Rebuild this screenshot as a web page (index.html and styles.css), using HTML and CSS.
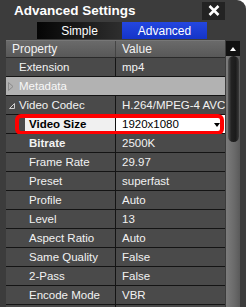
FILE: index.html
```html
<!DOCTYPE html>
<html lang="en">
<head>
    <meta charset="UTF-8">
    <title>Advanced Settings</title>
    <link rel="stylesheet" href="styles.css">
</head>
<body>
    <div class="window">
        <div class="titlebar">
            <span class="title">Advanced Settings</span>
            <div class="close">
                <svg width="12" height="11" viewBox="0 0 12 11"><path d="M1.5 1 L10.5 10 M10.5 1 L1.5 10" stroke="#fff" stroke-width="2.6" fill="none"/></svg>
            </div>
        </div>
        <div class="tabs">
            <div class="tab simple">Simple</div>
            <div class="tab active">Advanced</div>
        </div>
        <div class="grid-wrap">
            <div class="grid">
                <div class="row head">
                    <div class="cell name">Property</div>
                    <div class="cell value">Value</div>
                </div>
                <div class="row">
                    <div class="cell name lvl0">Extension</div>
                    <div class="cell value">mp4</div>
                </div>
                <div class="row group">
                    <div class="cell full lvl0">
                        <svg class="exp" width="6" height="9" viewBox="0 0 6 9"><path d="M0.5 0.5 L5 4.5 L0.5 8.5 Z" fill="none" stroke="#8a8a8a"/></svg>
                        Metadata
                    </div>
                </div>
                <div class="row">
                    <div class="cell name lvl0">
                        <svg class="exp open" width="6" height="6" viewBox="0 0 6 6"><path d="M5.5 0.5 L5.5 5.5 L0.5 5.5 Z" fill="none" stroke="#cfcfcf"/></svg>
                        Video Codec
                    </div>
                    <div class="cell value">H.264/MPEG-4 AVC</div>
                </div>
                <div class="row selected">
                    <div class="cell name lvl1"><span class="label">Video Size</span></div>
                    <div class="cell value">1920x1080<span class="drop"></span></div>
                    <div class="mark"></div>
                </div>
                <div class="row">
                    <div class="cell name lvl1 bold">Bitrate</div>
                    <div class="cell value">2500K</div>
                </div>
                <div class="row">
                    <div class="cell name lvl1">Frame Rate</div>
                    <div class="cell value">29.97</div>
                </div>
                <div class="row">
                    <div class="cell name lvl1">Preset</div>
                    <div class="cell value">superfast</div>
                </div>
                <div class="row">
                    <div class="cell name lvl1">Profile</div>
                    <div class="cell value">Auto</div>
                </div>
                <div class="row">
                    <div class="cell name lvl1">Level</div>
                    <div class="cell value">13</div>
                </div>
                <div class="row">
                    <div class="cell name lvl1">Aspect Ratio</div>
                    <div class="cell value">Auto</div>
                </div>
                <div class="row">
                    <div class="cell name lvl1">Same Quality</div>
                    <div class="cell value">False</div>
                </div>
                <div class="row">
                    <div class="cell name lvl1">2-Pass</div>
                    <div class="cell value">False</div>
                </div>
                <div class="row">
                    <div class="cell name lvl1">Encode Mode</div>
                    <div class="cell value">VBR</div>
                </div>
                <div class="row last">
                    <div class="cell name lvl1"></div>
                    <div class="cell value"></div>
                </div>
            </div>
            <div class="scrollbar">
                <div class="arrow"><span class="up"></span></div>
                <div class="track"><div class="thumb"></div></div>
            </div>
        </div>
    </div>
</body>
</html>
```

FILE: styles.css
```css
body{
    margin: 0;
    background-color: #fff;
    font-family: 'Liberation Sans', Arial, sans-serif;
}
.window{
    width: 246px;
    height: 307px;
    background-color: #3c3c3c;
    border-top-right-radius: 9px;
    overflow: hidden;
}
.titlebar{
    height: 21px;
    display: flex;
    align-items: center;
    padding-left: 14px;
}
.title{
    color: #fff;
    font-weight: bold;
    font-size: 13.5px;
    margin-top: -1px;
}
.close{
    margin-left: auto;
    margin-right: 21px;
    width: 23px;
    height: 18px;
    background-color: #232323;
    display: flex;
    align-items: center;
    justify-content: center;
}
.tabs{
    display: flex;
    margin-left: 37px;
    margin-top: 1px;
    height: 17px;
}
.tab{
    width: 85px;
    color: #fff;
    font-size: 12px;
    display: flex;
    align-items: center;
    justify-content: center;
}
.simple{
    background: linear-gradient(90deg, #050505, #2e2e2e);
}
.active{
    background: linear-gradient(180deg, #2447e0, #1434c8);
}
.grid-wrap{
    display: flex;
    margin-top: 2px;
    padding-left: 6px;
}
.grid{
    width: 219px;
}
.row{
    display: flex;
    height: 18px;
    border-bottom: 1px solid #141414;
    background-color: #4a4a4a;
    color: #f2f2f2;
    font-size: 11.5px;
    position: relative;
}
.head{
    height: 16px;
    font-size: 12px;
    background: linear-gradient(180deg, #6a6a6a, #585858);
    border-top: 1px solid #777;
    border-bottom: 1px solid #2a2a2a;
    margin-top: -1px;
}
.cell{
    display: flex;
    align-items: center;
    white-space: nowrap;
    overflow: hidden;
}
.name{
    width: 110px;
    border-right: 1px solid #141414;
    padding-left: 6px;
    box-sizing: border-box;
}
.value{
    flex: 1;
    padding-left: 6px;
}
.head .name{
    border-right-color: #444;
}
.lvl0{
    padding-left: 13px;
    position: relative;
}
.lvl1{
    padding-left: 23px;
}
.bold{
    font-weight: bold;
}
.exp{
    position: absolute;
    left: 2px;
    top: 5px;
}
.exp.open{
    left: 3px;
    top: 7px;
}
.group{
    background-color: #b2b2b2;
}
.group .full{
    color: #f8f8f8;
}
.full{
    flex: 1;
}
.selected .name{
    padding-left: 19px;
}
.label{
    display: flex;
    align-items: center;
    height: 100%;
    flex: 1;
    padding-left: 4px;
    background-color: #f0f0f0;
    color: #000;
    font-weight: bold;
}
.selected .value{
    background-color: #fff;
    color: #000;
    position: relative;
}
.drop{
    position: absolute;
    right: 5px;
    top: 8px;
    border-left: 3px solid transparent;
    border-right: 3px solid transparent;
    border-top: 4px solid #000;
}
.mark{
    position: absolute;
    left: 9px;
    right: 1px;
    top: -1px;
    bottom: -2px;
    border: 4px solid #f00;
    border-radius: 6px;
}
.scrollbar{
    width: 14px;
    margin-left: 1px;
    display: flex;
    flex-direction: column;
}
.arrow{
    height: 15px;
    background-color: #111;
    display: flex;
    align-items: center;
    justify-content: center;
}
.up{
    border-left: 3px solid transparent;
    border-right: 3px solid transparent;
    border-bottom: 4px solid #fff;
}
.track{
    flex: 1;
    height: 260px;
    background: linear-gradient(90deg, #7c7c7c, #6a6a6a 60%, #5a5a5a);
    padding-left: 2px;
}
.thumb{
    width: 11px;
    height: 86px;
    border-radius: 6px;
    background: linear-gradient(90deg, #555, #222 30%, #1b1b1b 70%, #3a3a3a);
}
```
